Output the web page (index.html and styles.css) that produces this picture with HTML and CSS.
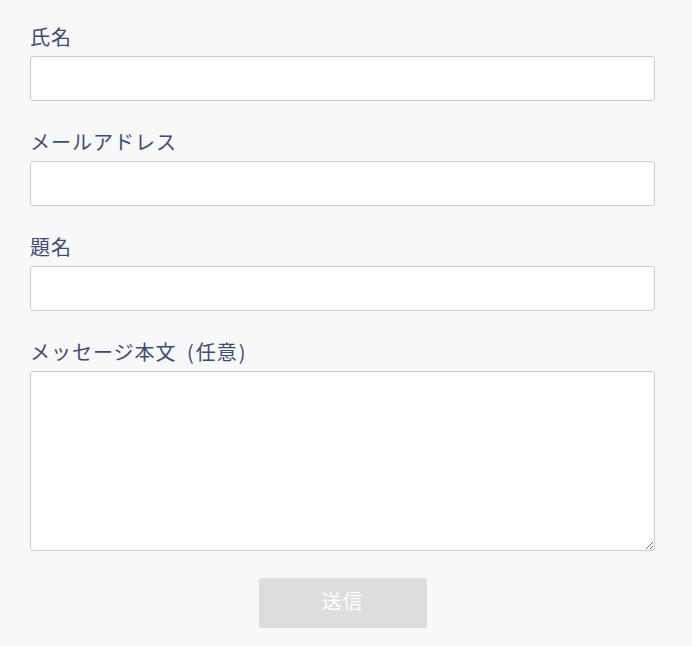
FILE: index.html
```html
<!DOCTYPE html>
<html lang="ja">
<head>
<meta charset="utf-8">
<link rel="stylesheet" href="styles.css">
</head>
<body>
<form class="form">
  <div class="field">
    <label class="label">氏名</label>
    <input class="input" type="text">
  </div>
  <div class="field">
    <label class="label">メールアドレス</label>
    <input class="input" type="text">
  </div>
  <div class="field">
    <label class="label">題名</label>
    <input class="input" type="text">
  </div>
  <div class="field">
    <label class="label">メッセージ本文 <span class="paren">(</span>任意<span class="paren">)</span></label>
    <textarea class="textarea"></textarea>
  </div>
  <div class="actions">
    <button class="submit" type="button">送信</button>
  </div>
</form>
</body>
</html>
```
FILE: styles.css
```css
html, body {
  margin: 0;
  padding: 0;
  background: #f8f8f8;
}
body {
  font-family: "Noto Sans CJK JP", "Noto Sans", sans-serif;
}
.form {
  padding: 22px 37px 0 30px;
  display: flex;
  flex-direction: column;
}
.field {
  display: flex;
  flex-direction: column;
  margin-bottom: 26px;
}
.label {
  font-size: 20px;
  line-height: 30px;
  letter-spacing: 1px;
  word-spacing: 4px;
  color: #3d4a7c;
  margin-bottom: 4px;
}
.paren {
  margin: 0 1px;
}
.input, .textarea {
  box-sizing: border-box;
  width: 625px;
  border: 1px solid #cccccc;
  border-radius: 3px;
  background: #ffffff;
  margin: 0;
  font-family: inherit;
  font-size: 16px;
}
.input {
  height: 45px;
}
.textarea {
  height: 180px;
  resize: vertical;
  display: block;
}
.actions {
  display: flex;
  justify-content: center;
  width: 625px;
  margin-top: 1px;
}
.submit {
  width: 168px;
  height: 50px;
  border: none;
  border-radius: 3px;
  background: #dddddd;
  color: #ffffff;
  font-family: inherit;
  font-size: 20px;
  line-height: 1;
  letter-spacing: 1px;
  padding: 0 0 4px;
  margin: 0;
}
```
